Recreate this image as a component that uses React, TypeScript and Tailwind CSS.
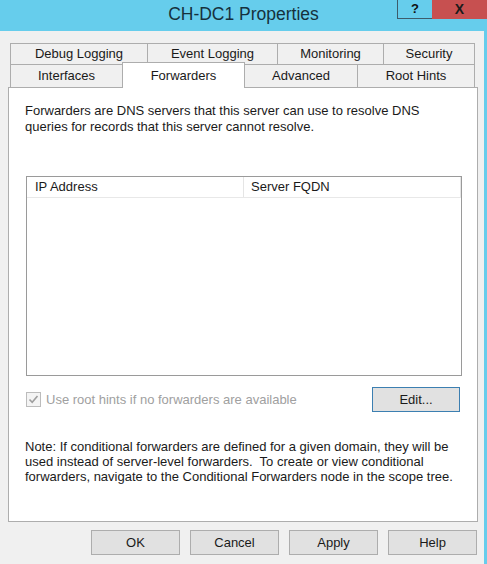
import React from 'react';

const backTabs = [
  { name: 'Debug Logging', w: 'w-[137px]' },
  { name: 'Event Logging', w: 'w-[130px]' },
  { name: 'Monitoring', w: 'w-[106px]' },
  { name: 'Security', w: 'w-[92px]' },
];

const DialogButton: React.FC<{ label: string; primary?: boolean; wide?: boolean }> = ({ label, primary, wide }) => (
  <button
    className={`${wide ? 'w-[89px]' : 'w-[88px]'} h-[25px] bg-[#e1e1e1] text-[13px] text-[#1a1a1a] border ${
      primary ? 'border-[#3c7fb1]' : 'border-[#adadad]'
    }`}
  >
    {label}
  </button>
);

const App: React.FC = () => {
  return (
    <div className="w-[487px] h-[564px] bg-[#f0f0f0] flex flex-col overflow-hidden font-['Liberation_Sans',Arial,sans-serif]">
      {/* title bar */}
      <div className="relative h-[31px] bg-[#66cdec] flex items-center justify-center">
        <span className="text-[17.5px] text-[#16313d] pb-[3px]">CH-DC1 Properties</span>
        <div className="absolute top-0 right-0 flex">
          <div className="w-[35px] h-[19px] bg-[#66cdec] border-l border-b border-[#3d5c6b] flex items-center justify-center text-[13px] font-bold text-[#111]">
            ?
          </div>
          <div className="w-[55px] h-[19px] bg-[#c75050] flex items-center justify-center text-[14px] font-bold text-[#1b1b1b]">
            X
          </div>
        </div>
      </div>

      {/* body */}
      <div className="flex-1 flex flex-col border-r-[3px] border-[#66cdec] pl-[8px] pr-[6px] pt-[12px]">
        {/* tabs */}
        <div className="ml-[2px] flex flex-col text-[13px] text-[#1a1a1a]">
          <div className="flex h-[21px]">
            {backTabs.map((t, i) => (
              <div
                key={t.name}
                className={`${t.w} flex items-center justify-center border-t border-l border-[#adadad] bg-[#f0f0f0] ${
                  i === backTabs.length - 1 ? 'border-r' : ''
                }`}
              >
                {t.name}
              </div>
            ))}
          </div>
          <div className="flex h-[23px]">
            <div className="w-[112px] flex items-center justify-center border-t border-l border-[#adadad] bg-[#f0f0f0]">
              Interfaces
            </div>
            <div className="relative z-10 w-[123px] h-[26px] -mt-[2px] flex justify-center pt-[3px] border-t border-l border-r border-[#adadad] bg-white">
              Forwarders
            </div>
            <div className="w-[112px] flex items-center justify-center border-t border-[#adadad] bg-[#f0f0f0]">
              Advanced
            </div>
            <div className="w-[118px] flex items-center justify-center border-t border-l border-r border-[#adadad] bg-[#f0f0f0]">
              Root Hints
            </div>
          </div>
        </div>

        {/* panel */}
        <div className="h-[435px] bg-white border border-[#adadad] pl-[16px] pr-[12px] pt-[15px] flex flex-col text-[13px] text-[#1a1a1a]">
          <p className="leading-[16px] w-[420px]">
            Forwarders are DNS servers that this server can use to resolve DNS queries for records that this server
            cannot resolve.
          </p>

          <div className="mt-[41px] ml-[1px] w-[436px] h-[200px] border border-[#9a9a9a] flex flex-col">
            <div className="flex h-[21px] border-b border-[#e8e8e8]">
              <div className="w-[217px] border-r border-[#e5e5e5] pl-[8px] flex items-center">IP Address</div>
              <div className="flex-1 pl-[7px] flex items-center border-r border-[#e5e5e5]">Server FQDN</div>
            </div>
          </div>

          <div className="mt-[11px] flex items-center justify-between h-[25px] pr-[5px]">
            <label className="flex items-center gap-[5px] text-[#a0a0a0] ml-[1px]">
              <span className="w-[15px] h-[15px] border border-[#bcbcbc] bg-[#f4f4f4] flex items-center justify-center">
                <svg width="11" height="11" viewBox="0 0 11 11">
                  <path d="M1.5 5.5 L4.2 8.3 L9.5 2" fill="none" stroke="#9e9e9e" strokeWidth="1.6" />
                </svg>
              </span>
              Use root hints if no forwarders are available
            </label>
            <DialogButton label="Edit..." primary />
          </div>

          <p className="mt-[27px] leading-[15px] w-[435px]">
            Note: If conditional forwarders are defined for a given domain, they will be used instead of server-level
            forwarders.&nbsp; To create or view conditional forwarders, navigate to the Conditional Forwarders node in
            the scope tree.
          </p>
        </div>

        {/* dialog buttons */}
        <div className="mt-[8px] flex justify-end gap-[10px] pr-[1px]">
          <DialogButton label="OK" wide />
          <DialogButton label="Cancel" wide />
          <DialogButton label="Apply" wide />
          <DialogButton label="Help" wide />
        </div>
      </div>
    </div>
  );
};

export default App;
